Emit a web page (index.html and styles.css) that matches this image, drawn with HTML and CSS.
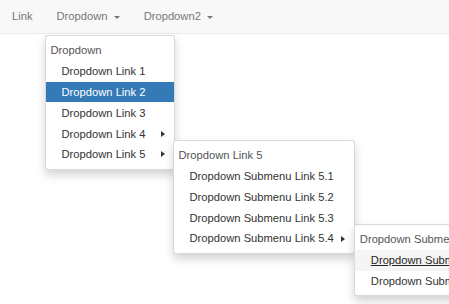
FILE: index.html
```html
<!DOCTYPE html>
<html>
<head>
<meta charset="utf-8">
<link rel="stylesheet" href="styles.css">
</head>
<body>
<nav class="navbar">
  <ul class="nav">
    <li class="nav-item"><a class="nav-link">Link</a></li>
    <li class="nav-item">
      <a class="nav-link">Dropdown <span class="caret"></span></a>
      <ul class="menu main-menu">
        <li class="menu-header">Dropdown</li>
        <li class="menu-item"><a>Dropdown Link 1</a></li>
        <li class="menu-item active"><a>Dropdown Link 2</a></li>
        <li class="menu-item"><a>Dropdown Link 3</a></li>
        <li class="menu-item has-sub"><a>Dropdown Link 4</a><span class="arrow"></span></li>
        <li class="menu-item has-sub">
          <a>Dropdown Link 5</a><span class="arrow"></span>
          <ul class="menu submenu">
            <li class="menu-header">Dropdown Link 5</li>
            <li class="menu-item"><a>Dropdown Submenu Link 5.1</a></li>
            <li class="menu-item"><a>Dropdown Submenu Link 5.2</a></li>
            <li class="menu-item"><a>Dropdown Submenu Link 5.3</a></li>
            <li class="menu-item has-sub">
              <a>Dropdown Submenu Link 5.4</a><span class="arrow"></span>
              <ul class="menu submenu nested">
                <li class="menu-header">Dropdown Submenu Link 5.4</li>
                <li class="menu-item hover"><a>Dropdown Submenu Link 5.4.1</a></li>
                <li class="menu-item"><a>Dropdown Submenu Link 5.4.2</a></li>
              </ul>
            </li>
          </ul>
        </li>
      </ul>
    </li>
    <li class="nav-item"><a class="nav-link">Dropdown2 <span class="caret"></span></a></li>
  </ul>
</nav>
</body>
</html>
```

FILE: styles.css
```css
html, body {
  margin: 0;
  padding: 0;
  overflow: hidden;
  background: #fff;
}
body {
  font-family: "Liberation Sans", Arial, sans-serif;
  font-size: 11.2px;
  color: #333;
  width: 449px;
  height: 304px;
}
ul {
  list-style: none;
  margin: 0;
  padding: 0;
}
.navbar {
  background: #f8f8f8;
  border-bottom: 1px solid #ececec;
  height: 33px;
}
.nav {
  display: flex;
}
.nav-item {
  position: relative;
}
.nav-link {
  display: block;
  padding: 8px 12px 9px;
  line-height: 16px;
  color: #777;
  white-space: nowrap;
}
.caret {
  display: inline-block;
  width: 0;
  height: 0;
  margin-left: 3px;
  vertical-align: middle;
  border-top: 3.2px solid #777;
  border-left: 3.2px solid transparent;
  border-right: 3.2px solid transparent;
}
.menu {
  position: absolute;
  background: #fff;
  border: 1px solid rgba(0,0,0,0.15);
  border-radius: 3px;
  box-shadow: 0 5px 10px rgba(0,0,0,0.175);
  padding: 4px 0;
  min-width: 128px;
  z-index: 10;
}
.main-menu {
  top: calc(100% + 2px);
  left: 0;
}
.submenu {
  top: -4px;
  left: 100%;
  margin-left: -1px;
}
.submenu.nested {
  margin-left: 0;
}
.menu-header {
  padding: 2.4px 16px 2.4px 5px;
  line-height: 16px;
  color: #555;
  white-space: nowrap;
}
.menu-item {
  position: relative;
}
.menu-item > a {
  display: block;
  padding: 2.4px 20px 2.4px 16px;
  line-height: 16px;
  color: #333;
  white-space: nowrap;
}
.menu-item.active > a {
  background: #337ab7;
  color: #fff;
}
.menu-item.hover > a {
  background: #f5f5f5;
  color: #262626;
  text-decoration: underline;
}
.arrow {
  position: absolute;
  right: 9px;
  top: 7.5px;
  width: 0;
  height: 0;
  border-left: 4px solid #333;
  border-top: 3.5px solid transparent;
  border-bottom: 3.5px solid transparent;
}
```
